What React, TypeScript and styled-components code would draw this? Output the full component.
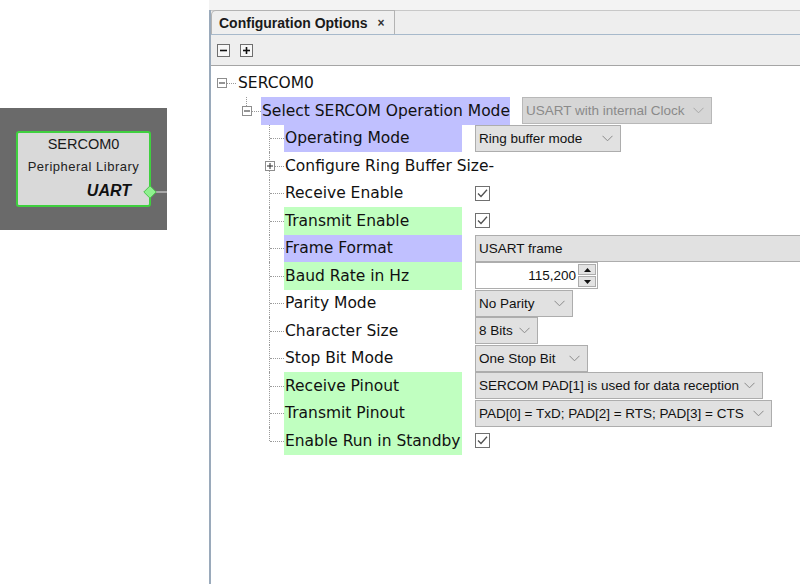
import React from "react";
import styled, { createGlobalStyle, css } from "styled-components";

const Global = createGlobalStyle`
  html, body { margin: 0; padding: 0; background: #ffffff; }
  body { font-family: "DejaVu Sans", sans-serif; overflow: hidden; }
`;

const Page = styled.div`
  display: flex;
  width: 800px;
  height: 584px;
  overflow: hidden;
`;

/* ---------- left canvas ---------- */
const LeftPane = styled.div`
  width: 209px;
  flex: none;
  padding-top: 108px;
  box-sizing: border-box;
`;

const Canvas = styled.div`
  width: 167px;
  height: 122px;
  background: #6a6a6a;
  padding: 23px 0 0 16px;
  box-sizing: border-box;
`;

const Node = styled.div`
  position: relative;
  width: 135px;
  height: 76px;
  box-sizing: border-box;
  background: #d9d9d9;
  border: 2px solid #3fd03f;
  border-radius: 3px;
  display: flex;
  flex-direction: column;
  align-items: center;
  color: #1a1a1a;
`;

const NodeTitle = styled.div`
  font-family: "Liberation Sans", sans-serif;
  font-size: 14.5px;
  margin-top: 2px;
  line-height: 18px;
`;

const NodeSub = styled.div`
  font-family: "Liberation Sans", sans-serif;
  font-size: 13px;
  letter-spacing: 0.5px;
  margin-top: 7px;
  line-height: 14px;
  color: #222;
`;

const NodeKind = styled.div`
  align-self: flex-end;
  margin-right: 18px;
  margin-top: 8px;
  font-family: "Liberation Sans", sans-serif;
  font-weight: bold;
  font-style: italic;
  font-size: 16px;
  line-height: 18px;
  color: #111;
`;

const Port = styled.svg`
  position: absolute;
  right: -18px;
  top: 52px;
`;

/* ---------- right panel ---------- */
const RightPane = styled.div`
  flex: 1;
  display: flex;
  flex-direction: column;
  background: #f3f3f3;
`;

const TopStrip = styled.div`
  height: 10px;
  flex: none;
`;

const Panel = styled.div`
  flex: 1;
  display: flex;
  flex-direction: column;
  border-left: 2px solid #9aaabb;
  background: #ffffff;
`;

const TabBar = styled.div`
  height: 24px;
  box-sizing: border-box;
  border-top: 1px solid #c8c8c8;
  background: #eeeeee;
  display: flex;
  align-items: flex-end;
`;

const Tab = styled.div`
  height: 24px;
  margin-top: -1px;
  width: 184px;
  box-sizing: border-box;
  border: 1px solid #b3b3b3;
  border-bottom: none;
  border-top-left-radius: 5px;
  background: #efefef;
  display: flex;
  align-items: center;
  padding-left: 7px;
  font-family: "Liberation Sans", sans-serif;
  font-weight: bold;
  font-size: 14px;
  color: #1a1a1a;
`;

const TabClose = styled.span`
  margin-left: 10px;
  font-size: 12px;
  font-weight: bold;
  color: #333;
`;

const Toolbar = styled.div`
  height: 32px;
  box-sizing: border-box;
  border-top: 1px solid #a7b9cb;
  border-bottom: 1px solid #a5a5a5;
  background: #eeeeee;
  display: flex;
  align-items: center;
  gap: 10px;
  padding-left: 6px;
`;

const ToolButton = styled.svg`
  display: block;
`;

const Tree = styled.div`
  flex: 1;
  padding-top: 3.5px;
  background: #ffffff;
`;

const Row = styled.div`
  display: flex;
  align-items: stretch;
  height: 27.5px;
`;

const Branch = styled.div<{ $w: number }>`
  position: relative;
  flex: none;
  width: ${(p) => p.$w}px;
`;

const dotted = "#9a9a9a";

const HLine = styled.div<{ $from: number; $to: number }>`
  position: absolute;
  top: 50%;
  left: ${(p) => p.$from}px;
  width: ${(p) => p.$to - p.$from}px;
  height: 0;
  border-top: 1px dotted ${dotted};
`;

const VLine = styled.div<{ $x: number; $top: string; $bottom: string }>`
  position: absolute;
  left: ${(p) => p.$x}px;
  top: ${(p) => p.$top};
  bottom: ${(p) => p.$bottom};
  width: 0;
  border-left: 1px dotted ${dotted};
`;

const Expander = styled.svg<{ $x: number }>`
  position: absolute;
  left: ${(p) => p.$x}px;
  top: 50%;
  margin-top: -5px;
  display: block;
`;

const Label = styled.div<{ $hl?: "blue" | "green"; $w?: number }>`
  flex: none;
  display: flex;
  align-items: center;
  padding-left: 1px;
  box-sizing: border-box;
  font-family: "DejaVu Sans", sans-serif;
  font-size: 15.5px;
  color: #111;
  white-space: nowrap;
  ${(p) => p.$w && css`width: ${p.$w}px;`}
  ${(p) =>
    p.$hl === "blue" &&
    css`
      background: #c0c0ff;
    `}
  ${(p) =>
    p.$hl === "green" &&
    css`
      background: #c0ffc0;
    `}
`;

const Value = styled.div<{ $gap: number }>`
  flex: 1;
  min-width: 0;
  margin-left: ${(p) => p.$gap}px;
  display: flex;
  align-items: flex-start;
`;

const valueFont = css`
  font-family: "Liberation Sans", sans-serif;
  font-size: 13.5px;
`;

const Combo = styled.div<{ $w?: number; $disabled?: boolean }>`
  ${valueFont};
  height: 27px;
  box-sizing: border-box;
  ${(p) => (p.$w ? css`width: ${p.$w}px;` : css`margin-right: -4px;`)}
  flex: ${(p) => (p.$w ? "none" : "1")};
  display: flex;
  align-items: center;
  justify-content: space-between;
  padding: 0 7px 0 3px;
  border: 1px solid ${(p) => (p.$disabled ? "#b8b8b8" : "#adadad")};
  background: ${(p) => (p.$disabled ? "#d6d6d6" : "#e1e1e1")};
  color: ${(p) => (p.$disabled ? "#8a8a8a" : "#111")};
  white-space: nowrap;
  overflow: hidden;
`;

const Spinner = styled.div`
  ${valueFont};
  width: 123px;
  height: 27px;
  box-sizing: border-box;
  border: 1px solid #adadad;
  background: #ffffff;
  display: flex;
  align-items: stretch;
  color: #111;
`;

const SpinText = styled.div`
  flex: 1;
  display: flex;
  align-items: center;
  justify-content: flex-end;
  padding-right: 2px;
`;

const SpinButtons = styled.div`
  width: 18px;
  display: flex;
  flex-direction: column;
  padding: 1px 1px 1px 0;
  gap: 1px;
`;

const SpinButton = styled.div`
  flex: 1;
  background: #e3e3e3;
  border: 1px solid #acacac;
  display: flex;
  align-items: center;
  justify-content: center;
`;

const Check = styled.svg`
  display: block;
  margin-top: 6px;
`;

const CheckCell = styled.div`
  display: flex;
  align-items: flex-start;
  height: 100%;
`;

/* ---------- small drawings ---------- */
const Chevron = ({ color = "#8a8a8a" }: { color?: string }) => (
  <svg width="11" height="7" viewBox="0 0 11 7">
    <polyline points="0.5,0.8 5.5,5.8 10.5,0.8" fill="none" stroke={color} strokeWidth="1" />
  </svg>
);

const ExpIcon = ({ x, plus }: { x: number; plus?: boolean }) => (
  <Expander $x={x} width="10" height="10" viewBox="0 0 10 10">
    <rect x="0.5" y="0.5" width="9" height="9" fill="#fff" stroke="#8e8e8e" />
    <line x1="2" y1="5" x2="8" y2="5" stroke="#2a2a2a" />
    {plus && <line x1="5" y1="2" x2="5" y2="8" stroke="#2a2a2a" />}
  </Expander>
);

const CheckBox = () => (
  <CheckCell>
    <Check width="15" height="15" viewBox="0 0 15 15">
      <rect x="0.5" y="0.5" width="14" height="14" fill="#fff" stroke="#707070" />
      <polyline points="3,7.5 6,10.5 12,3.8" fill="none" stroke="#505050" strokeWidth="1.3" />
    </Check>
  </CheckCell>
);

type Item = {
  label: string;
  hl?: "blue" | "green";
  kind: "combo" | "check" | "spin" | "field" | "group";
  text?: string;
  w?: number;
};

const items: Item[] = [
  { label: "Operating Mode", hl: "blue", kind: "combo", text: "Ring buffer mode", w: 146 },
  { label: "Configure Ring Buffer Size-", kind: "group" },
  { label: "Receive Enable", kind: "check" },
  { label: "Transmit Enable", hl: "green", kind: "check" },
  { label: "Frame Format", hl: "blue", kind: "field", text: "USART frame" },
  { label: "Baud Rate in Hz", hl: "green", kind: "spin", text: "115,200" },
  { label: "Parity Mode", kind: "combo", text: "No Parity", w: 98 },
  { label: "Character Size", kind: "combo", text: "8 Bits", w: 63 },
  { label: "Stop Bit Mode", kind: "combo", text: "One Stop Bit", w: 113 },
  { label: "Receive Pinout", hl: "green", kind: "combo", text: "SERCOM PAD[1] is used for data reception", w: 288 },
  { label: "Transmit Pinout", hl: "green", kind: "combo", text: "PAD[0] = TxD; PAD[2] = RTS; PAD[3] = CTS", w: 297 },
  { label: "Enable Run in Standby", hl: "green", kind: "check" },
];

const renderValue = (it: Item) => {
  switch (it.kind) {
    case "combo":
      return (
        <Combo $w={it.w}>
          <span>{it.text}</span>
          <Chevron />
        </Combo>
      );
    case "field":
      return <Combo>{it.text}</Combo>;
    case "check":
      return <CheckBox />;
    case "spin":
      return (
        <Spinner>
          <SpinText>{it.text}</SpinText>
          <SpinButtons>
            <SpinButton>
              <svg width="7" height="4" viewBox="0 0 7 4">
                <polygon points="0,4 3.5,0 7,4" fill="#111" />
              </svg>
            </SpinButton>
            <SpinButton>
              <svg width="7" height="4" viewBox="0 0 7 4">
                <polygon points="0,0 3.5,4 7,0" fill="#111" />
              </svg>
            </SpinButton>
          </SpinButtons>
        </Spinner>
      );
    default:
      return null;
  }
};

export default function App() {
  return (
    <>
      <Global />
      <Page>
        <LeftPane>
          <Canvas>
            <Node>
              <NodeTitle>SERCOM0</NodeTitle>
              <NodeSub>Peripheral Library</NodeSub>
              <NodeKind>UART</NodeKind>
              <Port width="24" height="14" viewBox="0 0 24 14">
                <line x1="12" y1="7" x2="24" y2="7" stroke="#e6e6e6" strokeWidth="1" />
                <polygon points="7,0.8 13.2,7 7,13.2 0.8,7" fill="#8ff08f" stroke="#4cc44c" strokeWidth="1" />
              </Port>
            </Node>
          </Canvas>
        </LeftPane>
        <RightPane>
          <TopStrip />
          <Panel>
            <TabBar>
              <Tab>
                Configuration Options<TabClose>×</TabClose>
              </Tab>
            </TabBar>
            <Toolbar>
              <ToolButton width="13" height="13" viewBox="0 0 13 13">
                <rect x="0.5" y="0.5" width="12" height="12" fill="#f7f7f7" stroke="#6e6e6e" />
                <line x1="3" y1="6.5" x2="10" y2="6.5" stroke="#111" strokeWidth="1.6" />
              </ToolButton>
              <ToolButton width="13" height="13" viewBox="0 0 13 13">
                <rect x="0.5" y="0.5" width="12" height="12" fill="#f7f7f7" stroke="#6e6e6e" />
                <line x1="3" y1="6.5" x2="10" y2="6.5" stroke="#111" strokeWidth="1.6" />
                <line x1="6.5" y1="3" x2="6.5" y2="10" stroke="#111" strokeWidth="1.6" />
              </ToolButton>
            </Toolbar>
            <Tree>
              <Row>
                <Branch $w={26}>
                  <ExpIcon x={6} />
                  <HLine $from={16} $to={25} />
                </Branch>
                <Label>SERCOM0</Label>
              </Row>
              <Row>
                <Branch $w={50}>
                  <VLine $x={35} $top="0" $bottom="calc(50% + 5px)" />
                  <ExpIcon x={31} />
                  <HLine $from={41} $to={50} />
                </Branch>
                <Label $hl="blue">Select SERCOM Operation Mode</Label>
                <Value $gap={12}>
                  <Combo $w={190} $disabled>
                    <span>USART with internal Clock</span>
                    <Chevron color="#a8a8a8" />
                  </Combo>
                </Value>
              </Row>
              {items.map((it, i) => {
                const last = i === items.length - 1;
                return (
                  <Row key={it.label}>
                    <Branch $w={73}>
                      <VLine $x={58} $top="0" $bottom={last ? "50%" : "0"} />
                      {it.kind === "group" ? (
                        <>
                          <ExpIcon x={54} plus />
                          <HLine $from={64} $to={73} />
                        </>
                      ) : (
                        <HLine $from={59} $to={73} />
                      )}
                    </Branch>
                    <Label $hl={it.hl} $w={it.kind === "group" ? undefined : 178}>
                      {it.label}
                    </Label>
                    <Value $gap={13}>{renderValue(it)}</Value>
                  </Row>
                );
              })}
            </Tree>
          </Panel>
        </RightPane>
      </Page>
    </>
  );
}
